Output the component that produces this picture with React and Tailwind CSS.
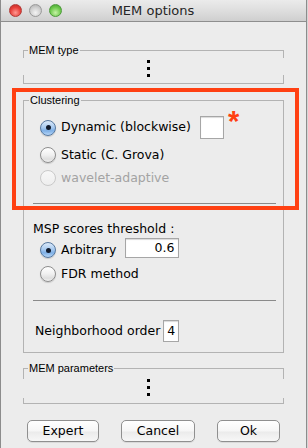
import React from "react";

const SANS = "font-['DejaVu_Sans',sans-serif]";
const SMALL = "font-['Liberation_Sans',Arial,sans-serif]";

function Radio({ checked, disabled }) {
  if (checked) {
    return (
      <span className="w-4 h-4 shrink-0 rounded-full border border-[#56789f] bg-[linear-gradient(to_bottom,#dbe9f9,#a9cbf0_45%,#7fb0e6_70%,#b7d6f7)] shadow-[0_1px_1px_rgba(0,0,0,0.15)] flex items-center justify-center">
        <span className="w-[5px] h-[5px] rounded-full bg-[#111a2b]" />
      </span>
    );
  }
  if (disabled) {
    return (
      <span className="w-4 h-4 shrink-0 rounded-full border border-[#c9c9c9] bg-[linear-gradient(to_bottom,#f7f7f7,#eeeeee)]" />
    );
  }
  return (
    <span className="w-4 h-4 shrink-0 rounded-full border border-[#8d8d8d] bg-[linear-gradient(to_bottom,#ffffff,#f0f0f0_50%,#dedede_80%,#f2f2f2)] shadow-[0_1px_1px_rgba(0,0,0,0.15)]" />
  );
}

function Legend({ children }) {
  return (
    <span
      className={`absolute left-[5px] top-[-7px] px-[1px] bg-[#ececec] text-[11px] leading-[13px] text-black ${SMALL}`}
    >
      {children}
    </span>
  );
}

function Dots({ top }) {
  return (
    <div className={`flex-1 flex flex-col items-start pl-[123px] gap-[4px] ${top}`}>
      <span className="w-[3px] h-[3px] bg-black" />
      <span className="w-[3px] h-[3px] bg-black" />
      <span className="w-[3px] h-[3px] bg-black" />
    </div>
  );
}

function CollapsedPanel({ label, height, topTick, bottomTick, dotsTop }) {
  return (
    <div className={`relative flex border-y border-[#b3b3b3] ${height}`}>
      <Legend>{label}</Legend>
      <div className="w-px flex flex-col justify-between">
        <span className={`w-px bg-[#b3b3b3] ${topTick}`} />
        <span className={`w-px bg-[#b3b3b3] ${bottomTick}`} />
      </div>
      <Dots top={dotsTop} />
      <div className="w-px flex flex-col justify-between">
        <span className={`w-px bg-[#b3b3b3] ${topTick}`} />
        <span className={`w-px bg-[#b3b3b3] ${bottomTick}`} />
      </div>
    </div>
  );
}

function Button({ children, w }) {
  return (
    <div
      className={`${w} h-[22px] rounded-[5px] border border-[#8f8f8f] bg-[linear-gradient(to_bottom,#ffffff,#f6f6f6_50%,#ebebeb_55%,#f7f7f7)] shadow-[0_1px_0_rgba(0,0,0,0.08)] flex items-center justify-center text-[12.5px] text-black ${SANS}`}
    >
      {children}
    </div>
  );
}

export default function App() {
  return (
    <div className="w-[308px] h-[448px] bg-[#d6d6d6] overflow-hidden">
      <div className="relative w-[307px] h-[448px] bg-[#ececec] border-x border-[#8c8c8c] flex flex-col">
        {/* Title bar */}
        <div className="relative h-[22px] shrink-0 border-b border-[#8e8e8e] bg-[linear-gradient(to_bottom,#ebebeb,#dedede_50%,#cfcfcf)] flex items-center">
          <div className="flex items-center gap-[7px] pl-[8px]">
            <span className="w-[13px] h-[13px] rounded-full border border-[#b23a36] bg-[radial-gradient(circle_at_50%_70%,#ff9a93,#e8403a_55%,#b92a24)]" />
            <span className="w-[13px] h-[13px] rounded-full border border-[#9a9a9a] bg-[radial-gradient(circle_at_50%_70%,#f4f4f4,#cfcfcf_55%,#a9a9a9)]" />
            <span className="w-[13px] h-[13px] rounded-full border border-[#4c9a3a] bg-[radial-gradient(circle_at_50%_70%,#c6f2a6,#6fca4e_55%,#3f9a2c)]" />
          </div>
          <div className={`flex-1 text-center pr-[62px] text-[13px] text-[#262626] ${SANS}`}>
            MEM options
          </div>
        </div>

        {/* Content */}
        <div className="flex flex-col px-[22px] pt-[28px]">
          <CollapsedPanel
            label="MEM type"
            height="h-[34px]"
            topTick="h-[7px]"
            bottomTick="h-[8px]"
            dotsTop="pt-[9px]"
          />

          {/* Clustering */}
          <div className={`relative mt-[16px] h-[253px] border border-[#b3b3b3] flex flex-col ${SANS} text-[12.5px] text-black`}>
            <Legend>Clustering</Legend>

            <div className="flex items-center h-[23px] mt-[15px] pl-[16px]">
              <Radio checked />
              <span className="ml-[5px]">Dynamic (blockwise)</span>
              <span className="ml-[9px] w-[24px] h-[23px] bg-white border border-[#a6a6a6] shadow-[inset_0_1px_1px_rgba(0,0,0,0.15)]" />
              <span className={`self-start -mt-[9px] ml-[4px] text-[29px] leading-[29px] font-bold text-[#ff4012] ${SMALL}`}>*</span>
            </div>
            <div className="flex items-center h-[20px] mt-[6px] pl-[16px]">
              <Radio />
              <span className="ml-[5px]">Static (C. Grova)</span>
            </div>
            <div className="flex items-center h-[20px] mt-[3px] pl-[16px]">
              <Radio disabled />
              <span className="ml-[5px] text-[#a3a3a3]">wavelet-adaptive</span>
            </div>

            <div className="mt-[15px] ml-[9px] mr-[7px] h-px bg-[#8a8a8a]" />

            <div className="mt-[17px] ml-[9px] h-[16px] leading-[16px]">MSP scores threshold :</div>
            <div className="flex items-center h-[20px] mt-[1px] pl-[16px]">
              <div className="flex items-center mt-[4px]">
                <Radio checked />
                <span className="ml-[5px]">Arbitrary</span>
              </div>
              <div className="ml-[9px] w-[54px] h-[20px] bg-white border border-[#a6a6a6] shadow-[inset_0_1px_1px_rgba(0,0,0,0.15)] flex items-center justify-end pr-[4px]">
                0.6
              </div>
            </div>
            <div className="flex items-center h-[20px] mt-[6px] pl-[16px]">
              <Radio />
              <span className="ml-[5px]">FDR method</span>
            </div>

            <div className="mt-[16px] ml-[9px] mr-[7px] h-px bg-[#8a8a8a]" />

            <div className="flex items-center h-[22px] mt-[19px] pl-[11px]">
              <span>Neighborhood order</span>
              <span className="ml-[3px] w-[16px] h-[22px] bg-white border border-[#a6a6a6] shadow-[inset_0_1px_1px_rgba(0,0,0,0.15)] flex items-center justify-center">
                4
              </span>
            </div>
          </div>

          <div className="mt-[15px]">
            <CollapsedPanel
              label="MEM parameters"
              height="h-[36px]"
              topTick="h-[10px]"
              bottomTick="h-[5px]"
              dotsTop="pt-[10px]"
            />
          </div>

          <div className="flex mt-[16px] pl-[4px] gap-[22px]">
            <Button w="w-[72px]">Expert</Button>
            <Button w="w-[74px]">Cancel</Button>
            <Button w="w-[63px]">Ok</Button>
          </div>
        </div>

        {/* Annotation overlay */}
        <div className="absolute left-[11px] top-[88px] w-[287px] h-[122px] border-4 border-[#ff4012] pointer-events-none" />
      </div>
    </div>
  );
}
